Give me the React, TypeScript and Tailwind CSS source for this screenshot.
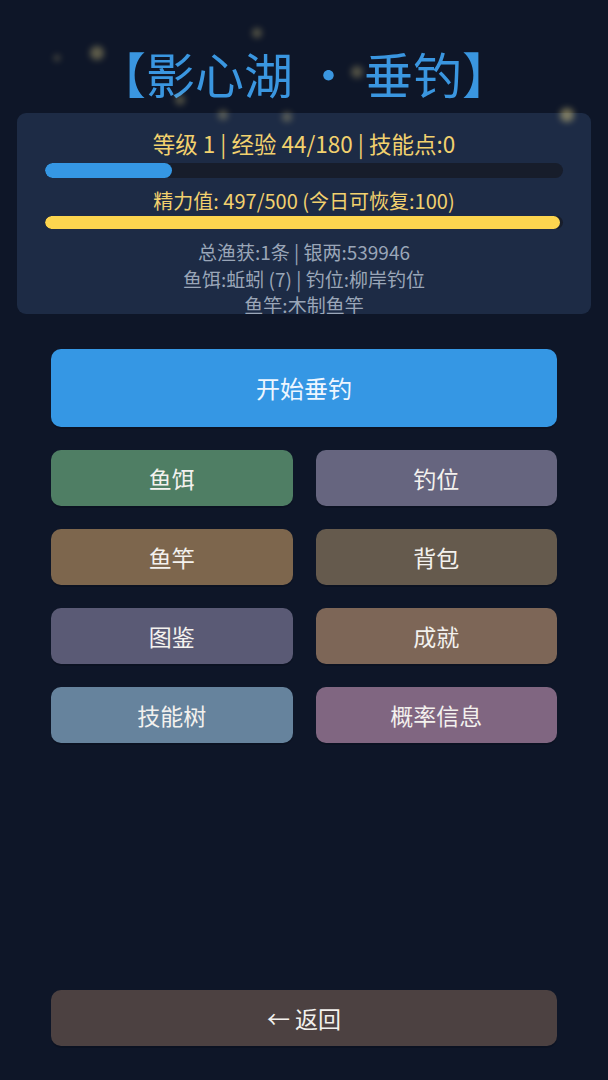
import React from "react";

const FONT = '"Noto Sans CJK SC", "Noto Sans", sans-serif';

const dots: { x: number; y: number; s: number; o: number }[] = [
  { x: 97, y: 53, s: 14, o: 0.35 },
  { x: 57, y: 58, s: 6, o: 0.3 },
  { x: 257, y: 33, s: 10, o: 0.3 },
  { x: 180, y: 100, s: 10, o: 0.3 },
  { x: 223, y: 115, s: 10, o: 0.3 },
  { x: 287, y: 117, s: 10, o: 0.3 },
  { x: 357, y: 72, s: 12, o: 0.3 },
  { x: 567, y: 115, s: 14, o: 0.45 },
];

const grid: { label: string; bg: string }[] = [
  { label: "鱼饵", bg: "bg-[#4f7e64]" },
  { label: "钓位", bg: "bg-[#66657f]" },
  { label: "鱼竿", bg: "bg-[#7d664d]" },
  { label: "背包", bg: "bg-[#655a4d]" },
  { label: "图鉴", bg: "bg-[#5a5a75]" },
  { label: "成就", bg: "bg-[#7d6657]" },
  { label: "技能树", bg: "bg-[#66839d]" },
  { label: "概率信息", bg: "bg-[#806681]" },
];

export default function App() {
  return (
    <div
      className="relative flex min-h-screen w-full flex-col overflow-hidden bg-[#0e1628]"
      style={{ fontFamily: FONT }}
    >
      {dots.map((d, i) => (
        <div
          key={i}
          className="pointer-events-none absolute rounded-full bg-[#f5e08a] blur-[3px]"
          style={{
            left: d.x - d.s / 2,
            top: d.y - d.s / 2,
            width: d.s,
            height: d.s,
            opacity: d.o,
          }}
        />
      ))}

      <h1 className="mt-[42px] text-center text-[49px] leading-[62px] font-normal text-[#3a96e0]">
        【影心湖 · 垂钓】
      </h1>

      <div className="mx-[17px] mt-[9px] h-[201px] overflow-hidden rounded-[9px] bg-[#1d2b45] px-[28px] pt-[16px]">
        <div className="text-center text-[22.5px] leading-[28px] text-[#f2d16e]">
          等级 1 | 经验 44/180 | 技能点:0
        </div>
        <div className="mt-[6px] h-[15px] w-full overflow-hidden rounded-full bg-[#171d2b]">
          <div className="h-full rounded-full bg-[#3597e4]" style={{ width: `${(44 / 180) * 100}%` }} />
        </div>
        <div className="mt-[10px] text-center text-[20px] leading-[26px] text-[#f2d16e]">
          精力值: 497/500 (今日可恢复:100)
        </div>
        <div className="mt-[2px] h-[13px] w-full overflow-hidden rounded-full bg-[#171d2b]">
          <div className="h-full rounded-full bg-[#fcd54f]" style={{ width: `${(497 / 500) * 100}%` }} />
        </div>
        <div className="mt-[10px] text-center text-[19px] leading-[26.5px] text-[#9aa6b8]">
          <div>总渔获:1条 | 银两:539946</div>
          <div>鱼饵:蚯蚓 (7) | 钓位:柳岸钓位</div>
          <div>鱼竿:木制鱼竿</div>
        </div>
      </div>

      <div className="mx-[51px] mt-[35px] flex flex-col">
        <button className="flex h-[78px] items-center justify-center rounded-[10px] bg-[#3597e4] text-[24px] text-[#eef6ff] shadow-[0_2px_0_rgba(0,0,0,0.15)]">
          开始垂钓
        </button>
        <div className="mt-[23px] grid grid-cols-2 gap-x-[23px] gap-y-[23px]">
          {grid.map((g) => (
            <button
              key={g.label}
              className={`flex h-[56px] items-center justify-center rounded-[10px] ${g.bg} text-[23px] text-[#f3f1ee] shadow-[0_2px_0_rgba(0,0,0,0.15)]`}
            >
              {g.label}
            </button>
          ))}
        </div>
      </div>

      <div className="mx-[51px] mt-auto mb-[34px]">
        <button className="flex h-[56px] w-full items-center justify-center rounded-[10px] bg-[#4c4141] text-[23px] text-[#f3f1ee] shadow-[0_2px_0_rgba(0,0,0,0.15)]">
          ← 返回
        </button>
      </div>
    </div>
  );
}
